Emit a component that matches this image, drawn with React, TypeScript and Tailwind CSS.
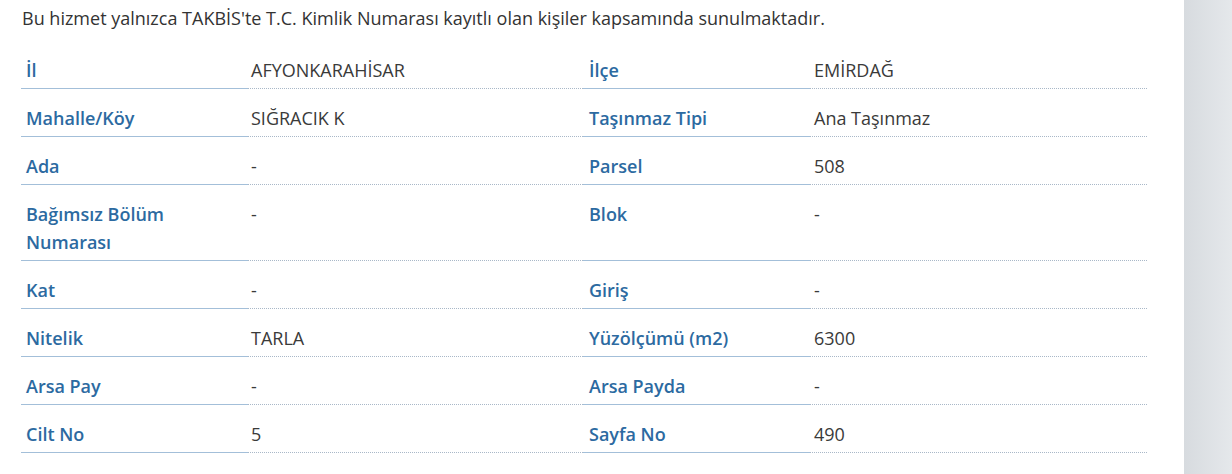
import React from 'react';

const rows: [string, string, string, string][] = [
    ['İl', 'AFYONKARAHİSAR', 'İlçe', 'EMİRDAĞ'],
    ['Mahalle/Köy', 'SIĞRACIK K', 'Taşınmaz Tipi', 'Ana Taşınmaz'],
    ['Ada', '-', 'Parsel', '508'],
    ['Bağımsız Bölüm Numarası', '-', 'Blok', '-'],
    ['Kat', '-', 'Giriş', '-'],
    ['Nitelik', 'TARLA', 'Yüzölçümü (m2)', '6300'],
    ['Arsa Pay', '-', 'Arsa Payda', '-'],
    ['Cilt No', '5', 'Sayfa No', '490'],
];

const labelCls =
    'pl-[5px] pr-2 pt-[15px] pb-[4px] border-b border-solid border-[#a3bfd9] text-[18px] leading-[28px] font-semibold text-[#2c6aa1]';
const valueCls =
    'pl-[3px] pr-2 pt-[15px] pb-[4px] border-b border-dotted border-[#a9b8c8] text-[18px] leading-[28px] text-[#3a3a3a]';

const App: React.FC = () => {
    return (
        <div className="flex w-[1232px] h-[474px] bg-white overflow-hidden" style={{ fontFamily: '"Open Sans", "Noto Sans", sans-serif' }}>
            <div className="w-[1184px] pl-[21px] pt-[5px]">
                <p className="text-[18px] leading-[26px] text-[#333] pl-[1px]">
                    Bu hizmet yalnızca TAKBİS'te T.C. Kimlik Numarası kayıtlı olan kişiler kapsamında sunulmaktadır.
                </p>
                <div className="mt-[10px] grid grid-cols-[227px_335px_227px_337px]">
                    {rows.map((r, i) => (
                        <React.Fragment key={i}>
                            <div className={labelCls}>{r[0]}</div>
                            <div className={valueCls}>{r[1]}</div>
                            <div className={`${labelCls} pl-[6px]`}>{r[2]}</div>
                            <div className={`${valueCls} pl-[4px]`}>{r[3]}</div>
                        </React.Fragment>
                    ))}
                </div>
            </div>
            <div className="flex-1 bg-gradient-to-r from-[#d7dbdf] to-[#e5e8eb]" />
        </div>
    );
};

export default App;
